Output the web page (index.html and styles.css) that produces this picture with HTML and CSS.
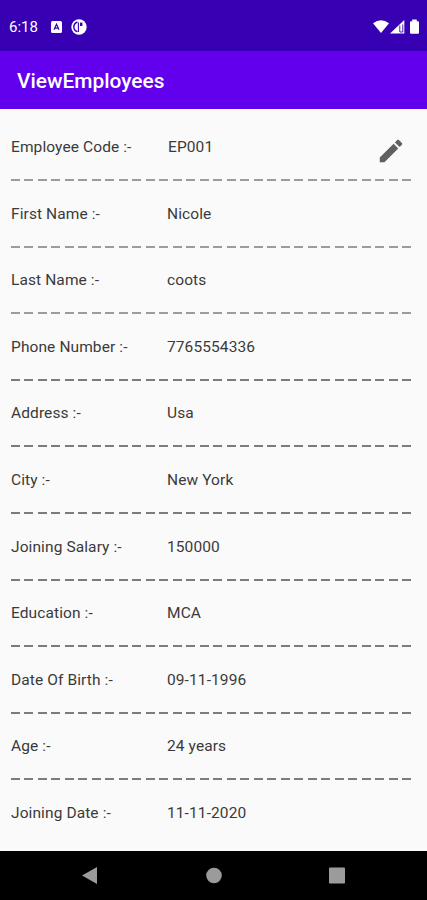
FILE: index.html
```html
<!DOCTYPE html>
<html lang="en">
<head>
  <meta charset="utf-8">
  <title>ViewEmployees</title>
  <link rel="stylesheet" href="styles.css">
</head>
<body>
  <div class="status-bar">
    <span class="time">6:18</span>
    <svg class="icon-a" width="11" height="12" viewBox="0 0 11 12">
      <rect width="11" height="12" rx="1.5" fill="#fff"/>
      <path d="M3 8.8 L5.5 3.2 L8 8.8 M3.8 7.2 H7.2" fill="none" stroke="#3700b3" stroke-width="1.2"/>
    </svg>
    <svg class="icon-p" width="16" height="16" viewBox="0 0 16 16">
      <circle cx="8" cy="8" r="7.7" fill="#fff"/>
      <path d="M6.4 3 Q2.8 4.6 2.8 8 Q2.8 11.2 6.4 12.8" fill="none" stroke="#3700b3" stroke-width="1.4"/>
      <path d="M7.4 3.4 V13" stroke="#3700b3" stroke-width="1.1"/>
      <path d="M9 3.6 H11.4 V7 H9 Z" fill="#3700b3"/>
    </svg>
    <span class="spacer"></span>
    <svg class="signals" width="48" height="16" viewBox="0 0 48 16">
      <path d="M0 4.3 Q8 -1.8 16 4.3 L8 14 Z" fill="#fff"/>
      <path d="M17 14.5 L31.3 1 V14.5 Z" fill="#fff"/>
      <path d="M26.8 6.5 V13 H29.8 V5.5" fill="none" stroke="#3700b3" stroke-width="0.9"/>
      <path d="M37 3.3 Q37 2.3 38 2.3 H39.2 V0.5 H43.8 V2.3 H45 Q46 2.3 46 3.3 V13.5 Q46 14.7 45 14.7 H38 Q37 14.7 37 13.5 Z" fill="#fff"/>
    </svg>
  </div>
  <div class="app-bar">ViewEmployees</div>

  <div class="details">
    <div class="row light">
      <span class="label">Employee Code :-</span>
      <span class="value code">EP001</span>
      <svg class="edit" width="30" height="30" viewBox="0 0 24 24">
        <path fill="#606060" d="M3 17.25V21h3.75L17.81 9.94l-3.75-3.75L3 17.25zM20.71 7.04c.39-.39.39-1.02 0-1.41l-2.34-2.34c-.39-.39-1.02-.39-1.41 0l-1.83 1.83 3.75 3.75 1.83-1.83z"/>
      </svg>
    </div>
    <div class="row light">
      <span class="label">First Name :-</span>
      <span class="value">Nicole</span>
    </div>
    <div class="row light">
      <span class="label">Last Name :-</span>
      <span class="value">coots</span>
    </div>
    <div class="row">
      <span class="label">Phone Number :-</span>
      <span class="value">7765554336</span>
    </div>
    <div class="row">
      <span class="label">Address :-</span>
      <span class="value">Usa</span>
    </div>
    <div class="row">
      <span class="label">City :-</span>
      <span class="value">New York</span>
    </div>
    <div class="row">
      <span class="label">Joining Salary :-</span>
      <span class="value">150000</span>
    </div>
    <div class="row">
      <span class="label">Education :-</span>
      <span class="value">MCA</span>
    </div>
    <div class="row">
      <span class="label">Date Of Birth :-</span>
      <span class="value">09-11-1996</span>
    </div>
    <div class="row">
      <span class="label">Age :-</span>
      <span class="value">24 years</span>
    </div>
    <div class="row">
      <span class="label">Joining Date :-</span>
      <span class="value">11-11-2020</span>
    </div>
  </div>

  <div class="nav-bar">
    <svg width="427" height="49" viewBox="0 0 427 49" fill="#9b9b9b">
      <path d="M82 24.5 L97 16 V33 Z"/>
      <circle cx="214" cy="24.5" r="7.8"/>
      <rect x="329" y="16.5" width="16" height="16" rx="0.8"/>
    </svg>
  </div>
</body>
</html>
```

FILE: styles.css
```css
* {
  box-sizing: border-box;
}

body {
  margin: 0;
  width: 427px;
  height: 900px;
  overflow: hidden;
  display: flex;
  flex-direction: column;
  background-color: #fafafa;
  font-family: Roboto, sans-serif;
}

.status-bar {
  height: 51px;
  padding: 2px 6px 0 9px;
  display: flex;
  align-items: center;
  flex-shrink: 0;
  background-color: #3700b3;
  color: white;
}

.time {
  width: 42px;
  font-size: 15px;
}

.icon-p {
  margin-left: 9px;
}

.spacer {
  flex: 1;
}

.app-bar {
  height: 58px;
  padding: 1px 0 0 17px;
  line-height: 58px;
  flex-shrink: 0;
  background-color: #6200ee;
  color: white;
  font-size: 20.9px;
  font-weight: 500;
}

.details {
  flex: 1;
  padding: 5.3px 15px 0 11px;
  overflow: hidden;
}

.row {
  height: 66.62px;
  padding-bottom: 1.2px;
  display: flex;
  align-items: center;
  color: #3a3a3a;
  font-size: 15.5px;
  letter-spacing: 0.1px;
  background-image: repeating-linear-gradient(to right, #7c7c7c 0, #7c7c7c 8.7px, transparent 8.7px, transparent 13.5px);
  background-position: left bottom;
  background-size: 401px 2px;
  background-repeat: no-repeat;
}

.light {
  background-image: repeating-linear-gradient(to right, #9c9c9c 0, #9c9c9c 8.7px, transparent 8.7px, transparent 13.5px);
}

.row:last-child {
  background: none;
}

.label {
  width: 156px;
}

.code {
  padding-left: 1px;
}

.edit {
  margin: 7px 6px 0 auto;
}

.nav-bar {
  height: 49px;
  flex-shrink: 0;
  background-color: black;
}

.nav-bar svg {
  display: block;
}
```
